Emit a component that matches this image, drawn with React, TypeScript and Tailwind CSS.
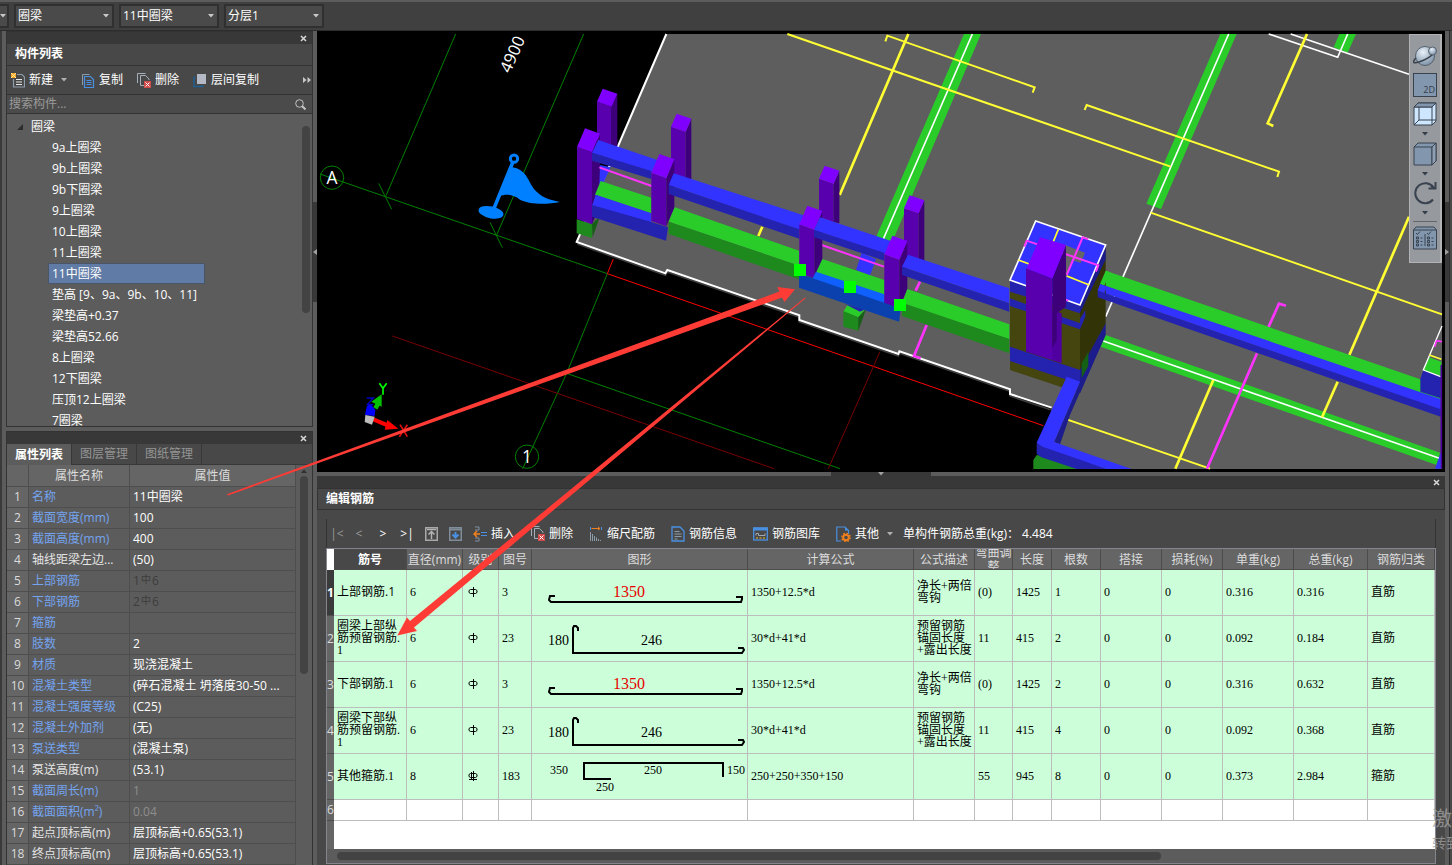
import { useState, type ReactNode } from "react";

// Rebar editor of the modelling tool: component tree and properties on the left,
// 3D view on top, rebar table below.

const UI_FONT = "font-['Open_Sans','Noto_Sans_CJK_SC',sans-serif]";
const CELL_FONT = "font-['Liberation_Serif','Noto_Sans_CJK_SC',serif]";

const COMPONENTS = [
  "9a上圈梁",
  "9b上圈梁",
  "9b下圈梁",
  "9上圈梁",
  "10上圈梁",
  "11上圈梁",
  "11中圈梁",
  "垫高 [9、9a、9b、10、11]",
  "梁垫高+0.37",
  "梁垫高52.66",
  "8上圈梁",
  "12下圈梁",
  "压顶12上圈梁",
  "7圈梁",
];

type Prop = { name: string; value: ReactNode; plain?: boolean; dim?: boolean };

function RebarValue({ count, size }: { count: number; size: number }) {
  return (
    <span className="flex h-5 items-center text-[#3c3c3c]">
      {count}
      <span className="mx-px pb-1 text-[10px] leading-3">中</span>
      {size}
    </span>
  );
}

const PROPS: Prop[] = [
  { name: "名称", value: "11中圈梁" },
  { name: "截面宽度(mm)", value: "100" },
  { name: "截面高度(mm)", value: "400" },
  { name: "轴线距梁左边...", value: "(50)", plain: true },
  { name: "上部钢筋", value: <RebarValue count={1} size={6} /> },
  { name: "下部钢筋", value: <RebarValue count={2} size={6} /> },
  { name: "箍筋", value: "" },
  { name: "肢数", value: "2" },
  { name: "材质", value: "现浇混凝土" },
  { name: "混凝土类型", value: "(碎石混凝土 坍落度30-50 ..." },
  { name: "混凝土强度等级", value: "(C25)" },
  { name: "混凝土外加剂", value: "(无)" },
  { name: "泵送类型", value: "(混凝土泵)" },
  { name: "泵送高度(m)", value: "(53.1)", plain: true },
  { name: "截面周长(m)", value: "1", dim: true },
  { name: "截面面积(m²)", value: "0.04", dim: true },
  { name: "起点顶标高(m)", value: "层顶标高+0.65(53.1)", plain: true },
  { name: "终点顶标高(m)", value: "层顶标高+0.65(53.1)", plain: true },
];

type Shape = "straight" | "bent" | "stirrup";

type Rebar = {
  name: string;
  dia: string;
  code: string;
  shape: Shape;
  formula: string;
  desc: string;
  bend: string;
  len: string;
  count: string;
  unit: string;
  total: string;
  kind: string;
};

const REBARS: Rebar[] = [
  { name: "上部钢筋.1", dia: "6", code: "3", shape: "straight", formula: "1350+12.5*d", desc: "净长+两倍\n弯钩", bend: "(0)", len: "1425", count: "1", unit: "0.316", total: "0.316", kind: "直筋" },
  { name: "圈梁上部纵\n筋预留钢筋.\n1", dia: "6", code: "23", shape: "bent", formula: "30*d+41*d", desc: "预留钢筋\n锚固长度\n+露出长度", bend: "11", len: "415", count: "2", unit: "0.092", total: "0.184", kind: "直筋" },
  { name: "下部钢筋.1", dia: "6", code: "3", shape: "straight", formula: "1350+12.5*d", desc: "净长+两倍\n弯钩", bend: "(0)", len: "1425", count: "2", unit: "0.316", total: "0.632", kind: "直筋" },
  { name: "圈梁下部纵\n筋预留钢筋.\n1", dia: "6", code: "23", shape: "bent", formula: "30*d+41*d", desc: "预留钢筋\n锚固长度\n+露出长度", bend: "11", len: "415", count: "4", unit: "0.092", total: "0.368", kind: "直筋" },
  { name: "其他箍筋.1", dia: "8", code: "183", shape: "stirrup", formula: "250+250+350+150", desc: "", bend: "55", len: "945", count: "8", unit: "0.373", total: "2.984", kind: "箍筋" },
];

const HEADERS = ["筋号", "直径(mm)", "级别", "图号", "图形", "计算公式", "公式描述", "弯曲调整", "长度", "根数", "搭接", "损耗(%)", "单重(kg)", "总重(kg)", "钢筋归类"];

function Caret({ className = "" }: { className?: string }) {
  return (
    <svg viewBox="0 0 6 4" className={`h-1 w-1.5 ${className}`} fill="currentColor" aria-hidden>
      <path d="M0 0h6L3 3.5z" />
    </svg>
  );
}

function CloseBar() {
  return (
    <div className="flex h-3 shrink-0 items-center justify-end bg-[#383838] pr-[5px]">
      <button type="button" aria-label="关闭" className="text-[#d8d8d8]">
        <svg viewBox="0 0 7 7" className="h-[7px] w-[7px]" stroke="currentColor" strokeWidth="1.5">
          <path d="M1 1l5 5M6 1l-5 5" />
        </svg>
      </button>
    </div>
  );
}

function Combo({ value, label }: { value: string; label: string }) {
  return (
    <div className="relative h-6 w-[100px] border-2 border-[#303030] bg-[#4a4a4a]">
      <select aria-label={label} className="h-full w-full appearance-none bg-transparent pl-[2px] text-[12px] leading-5 text-white outline-none">
        <option>{value}</option>
      </select>
      <Caret className="pointer-events-none absolute top-2 right-[3px] text-[#c8c8c8]" />
    </div>
  );
}

// ---- small icons ----

function NewIcon() {
  return (
    <svg viewBox="0 0 14 15" className="h-[15px] w-[14px]" fill="none">
      <path d="M6 1.5h5l2.5 2.5v10h-11V6" stroke="#8d9cab" strokeWidth="1.2" />
      <path d="M5 6.5h6M5 9h6M5 11.500h6" stroke="#e6e6e6" />
      <rect x="0" y="0" width="5" height="5" fill="#f5a623" />
      <path d="M0 0l5 5M5 0L0 5" stroke="#fff2c0" strokeWidth=".8" />
    </svg>
  );
}

function CopyIcon() {
  return (
    <svg viewBox="0 0 14 15" className="h-[15px] w-[14px]" fill="none">
      <path d="M1.500 12V1.500h7" stroke="#8d9cab" />
      <path d="M3.500 3.500h6l3 3v8h-9z" stroke="#4a90e2" strokeWidth="1.200" />
      <path d="M5.500 7.500h5M5.500 9.500h5M5.500 11.500h5" stroke="#4a90e2" />
    </svg>
  );
}

function DeleteIcon() {
  return (
    <svg viewBox="0 0 14 15" className="h-[15px] w-[14px]" fill="none">
      <path d="M.5 10V.5h8M7 12.500H3.500v-10h5l3.500 3.500V7" stroke="#a4afb9" />
      <rect x="7" y="8" width="7" height="7" fill="#d04a4a" />
      <path d="M8.500 9.500l4 4M12.500 9.500l-4 4" stroke="#fff" />
    </svg>
  );
}

function LayerCopyIcon() {
  return (
    <svg viewBox="0 0 14 15" className="h-[15px] w-[14px]" fill="none">
      <path d="M2.500 4.500H1v9h8.500V12" stroke="#1f5f94" strokeWidth="1.500" />
      <rect x="4" y="1" width="9" height="10" fill="#b4b8c4" />
    </svg>
  );
}

function MoveIcon({ down }: { down?: boolean }) {
  return (
    <svg viewBox="0 0 13 14" className="h-[14px] w-[13px]" fill="none">
      <rect x=".75" y=".75" width="11.500" height="12.500" stroke={down ? "#7f8c99" : "#a9a9a9"} strokeWidth="1.500" />
      {down ? (
        <>
          <path d="M1 2.500h11" stroke="#7f8c99" strokeWidth="2" />
          <path d="M6.500 5v5M3.500 7.500l3 3 3-3" stroke="#4a90e2" strokeWidth="2" />
        </>
      ) : (
        <path d="M2 2.500h9M6.500 12V5M3.500 7.500l3-3 3 3" stroke="#b4b4b4" strokeWidth="1.500" />
      )}
    </svg>
  );
}

function InsertIcon() {
  return (
    <svg viewBox="0 0 14 16" className="h-4 w-[14px]" fill="none">
      <path d="M2 1h4v3H2M2 15h4v-3H2" stroke="#7f8fa0" />
      <path d="M7 8H2M4 5L1 8l3 3" stroke="#f0801e" strokeWidth="1.500" />
      <path d="M8 6.500h6M8 9.500h6" stroke="#4a90e2" />
    </svg>
  );
}

function ScaleIcon() {
  return (
    <svg viewBox="0 0 14 16" className="h-4 w-[14px]" fill="none">
      <path d="M1.500 1v3M12.500 1v3" stroke="#4a90e2" />
      <path d="M2.500 2.500h8M9 1l2 1.500L9 4" stroke="#f0801e" />
      <path d="M1.500 6v9M3.500 8v7M5.500 10v5M7.500 11.500v3.500M9.500 13v2M11.500 14v1" stroke="#8d9cab" />
    </svg>
  );
}

function InfoIcon() {
  return (
    <svg viewBox="0 0 14 16" className="h-4 w-[14px]" fill="none">
      <path d="M1 1h8l4 4v10H1z" stroke="#4a90e2" strokeWidth="1.300" />
      <path d="M3.500 5.500h5M3.500 8h7M3.500 10.500h7M3.500 13h3" stroke="#8d9cab" />
    </svg>
  );
}

function LibraryIcon() {
  return (
    <svg viewBox="0 0 15 14" className="h-[14px] w-[15px]" fill="none">
      <rect x=".7" y="1" width="13.600" height="12" stroke="#4a90e2" strokeWidth="1.300" />
      <path d="M0 2h15" stroke="#4a90e2" strokeWidth="3" />
      <path d="M3 8.500v-2h2.500v2h6.500v-2" stroke="#a0aab4" />
      <path d="M3 11h9" stroke="#f0c020" strokeDasharray="2 1.500" />
    </svg>
  );
}

function OtherIcon() {
  return (
    <svg viewBox="0 0 15 16" className="h-4 w-[15px]" fill="none">
      <path d="M5 15H.8V1H9l3.500 3.500V8" stroke="#4a90e2" strokeWidth="1.200" />
      <path d="M9 1v3.500h3.500" fill="#4a90e2" />
      <circle cx="10" cy="11.500" r="2.800" stroke="#f0801e" strokeWidth="2" />
      <circle cx="10" cy="11.500" r="4.200" stroke="#f0801e" strokeWidth="1.400" strokeDasharray="1.600 1.700" />
    </svg>
  );
}

function ToolButton({ icon, label, caret }: { icon: ReactNode; label: string; caret?: boolean }) {
  return (
    <button type="button" className="flex shrink-0 items-center gap-1 whitespace-nowrap">
      {icon}
      {label}
      {caret && <Caret className="ml-1 text-[#b0b0b0]" />}
    </button>
  );
}

// ---- left column ----

function ComponentPanel() {
  const [selected, setSelected] = useState("11中圈梁");
  return (
    <section className="flex min-h-0 flex-1 flex-col border border-[#333] bg-[#5c5c5c]">
      <CloseBar />
      <h2 className="h-[21px] shrink-0 bg-[#484848] pl-2 text-[12px] leading-5 font-bold text-white">构件列表</h2>
      <div className="flex h-[30px] shrink-0 items-center gap-3.5 border-y border-[#333] bg-[#484848] pl-1">
        <ToolButton icon={<NewIcon />} label="新建" caret />
        <ToolButton icon={<CopyIcon />} label="复制" />
        <ToolButton icon={<DeleteIcon />} label="删除" />
        <ToolButton icon={<LayerCopyIcon />} label="层间复制" />
        <button type="button" aria-label="更多" className="mr-px ml-auto text-[#c8c8c8]">
          <svg viewBox="0 0 8 6" className="h-1.5 w-2" fill="currentColor">
            <path d="M0 0l3.500 3L0 6zM4.500 0L8 3 4.500 6z" />
          </svg>
        </button>
      </div>
      <label className="flex h-[19px] shrink-0 items-center border-b border-[#333] bg-[#4b4b4b] pr-1.5">
        <input aria-label="搜索构件" placeholder="搜索构件..." className="min-w-0 flex-1 bg-transparent pl-0.5 text-[12px] leading-4 placeholder-[#9a9a9a] outline-none" />
        <svg viewBox="0 0 11 11" className="h-[11px] w-[11px]" fill="none" stroke="#c4c4c4">
          <circle cx="4.500" cy="4.500" r="3.800" />
          <path d="M7 7l3.500 3.500" strokeWidth="2" />
        </svg>
      </label>
      <div className="flex min-h-0 flex-1 overflow-hidden">
        <div className="min-w-0 flex-1 overflow-hidden pt-0.5">
          <div className="flex h-[21px] items-center gap-2 pl-2.5">
            <svg viewBox="0 0 6 6" className="h-1.5 w-1.5" fill="#2c2c2c">
              <path d="M6 0v6H0z" />
            </svg>
            圈梁
          </div>
          <ul className="pl-[41px]">
            {COMPONENTS.map((c) => (
              <li key={c}>
                <button
                  type="button"
                  onClick={() => setSelected(c)}
                  className={
                    c === selected
                      ? "block h-[21px] w-[157px] border border-[#4a5568] bg-[#607ba6] pl-[3px] text-left leading-[19px]"
                      : "block h-[21px] w-full pl-1 text-left leading-[21px] whitespace-nowrap"
                  }
                >
                  {c}
                </button>
              </li>
            ))}
          </ul>
        </div>
        <div className="w-2.5 shrink-0 pt-3">
          <div className="h-[187px] w-2 rounded-full bg-[#434343]" />
        </div>
      </div>
    </section>
  );
}

function PropertyPanel() {
  return (
    <section className="flex h-[434px] shrink-0 flex-col overflow-hidden border border-b-0 border-[#333] bg-[#5c5c5c]">
      <CloseBar />
      <div role="tablist" className="flex h-[21px] shrink-0 bg-[#484848] font-bold">
        <button type="button" role="tab" aria-selected className="w-16 bg-[#5c5c5c] text-white">
          属性列表
        </button>
        {["图层管理", "图纸管理"].map((t) => (
          <button key={t} type="button" role="tab" aria-selected={false} className="w-[65px] border-b border-l border-[#383838] font-normal text-[#959595]">
            {t}
          </button>
        ))}
        <div className="flex-1 border-b border-l border-[#383838]" />
      </div>
      <div className="flex">
        <table className="min-w-0 flex-1 table-fixed border-separate border-spacing-0">
          <colgroup>
            <col className="w-[22px]" />
            <col className="w-[101px]" />
            <col />
          </colgroup>
          <thead className="bg-[#656565] text-[#dcdcdc]">
            <tr className="h-[22px]">
              {["", "属性名称", "属性值"].map((h) => (
                <th key={h} className="border-r border-b border-[#4e4e4e] p-0 font-normal">
                  {h}
                </th>
              ))}
            </tr>
          </thead>
          <tbody>
            {PROPS.map((p, i) => (
              <tr key={p.name} className="h-[21px] leading-5">
                <th scope="row" className="border-r border-b border-[#4e4e4e] bg-[#656565] p-0 font-normal text-[#dcdcdc]">
                  {i + 1}
                </th>
                <td className={`truncate border-r border-b border-[#4e4e4e] p-0 pl-[3px] ${p.plain ? "text-[#e4e4e4]" : "text-[#74a4f0]"}`}>{p.name}</td>
                <td className={`truncate border-r border-b border-[#4e4e4e] p-0 pl-[3px] ${p.dim ? "text-[#8e8e8e]" : "text-white"}`}>{p.value}</td>
              </tr>
            ))}
          </tbody>
        </table>
        <div className="flex w-4 shrink-0 flex-col items-center gap-[3px] pt-1 text-[#303030]">
          <Caret className="rotate-180" />
          <div className="h-[198px] w-2 rounded-full bg-[#434343]" />
        </div>
      </div>
    </section>
  );
}

// ---- 3D view ----
// Scene units are a third of a pixel, so every vertex stays a whole number.

function Box({ pts, fill }: { pts: string; fill: string }) {
  return <polygon points={pts} fill={fill} />;
}

// x/y is the upper left corner of the front face.
function Post({ x, y, h, back }: { x: number; y: number; h: number; back?: boolean }) {
  const [dx, dy, w, k] = back ? [17, -39, 44, 15] : [24, -56, 45, 16];
  return (
    <g>
      <polygon points={`${x},${y} ${x + w},${y + k} ${x + w},${y + k + h} ${x},${y + h}`} fill="#5800ae" />
      <polygon
        points={`${x + w},${y + k} ${x + w + dx},${y + k + dy} ${x + w + dx},${y + k + h + (back ? 4 : dy)} ${x + w},${y + k + h}`}
        fill="#3d007a"
      />
      <polygon points={`${x},${y} ${x + dx},${y + dy} ${x + w + dx},${y + k + dy} ${x + w},${y + k}`} fill="#8000ff" />
    </g>
  );
}

const BLUE = "#3333ff";
const BLUE_D = "#2323af";
const GREEN = "#29cc29";
const GREEN_D = "#1e8a1e";

function Scene() {
  return (
    <svg viewBox="21 3 3384 1323" preserveAspectRatio="xMinYMin slice" className="absolute inset-0 h-full w-full" fill="none">
      <rect x="21" y="3" width="3384" height="1323" fill="#000" />

      {/* floor slab */}
      <Box pts="1069,12 800,636 1066,730 1072,720 1468,856 1468,870 1765,972 1768,964 2100,1078 2100,1092 2225,1133 2200,1317 3396,1317 3396,12" fill="#5e5e5e" />
      <path d="M802 642L1066 736L1072 726L1468 862V876L1765 978L1768 970L2100 1084V1098L2222 1139" stroke="#3e3e3e" strokeWidth="5" />
      <path d="M1069 12L800 636L1066 730L1072 720L1468 856V870L1765 972L1768 964L2100 1078V1092L2225 1133" stroke="#fff" strokeWidth="6" />

      {/* axis grid */}
      <g stroke="#008000" strokeWidth="3">
        <path d="M437 12L228 497M821 12L560 615M30 432L892 731L770 1030L638 1316M770 1030L1590 1316" />
        <path d="M206 460L245 538M540 577L577 653" />
        <circle cx="66" cy="443" r="35" />
        <circle cx="651" cy="1280" r="35" />
      </g>
      <path d="M910 687L892 731L2200 1187" stroke="#f00" strokeWidth="3" />
      <path d="M247 918L1392 1316M1710 965L1555 1316" stroke="#780000" strokeWidth="3" />
      <g fill="#fff" fontFamily="Open Sans, sans-serif" textAnchor="middle">
        <text x="66" y="462" fontSize="52">A</text>
        <text x="651" y="1299" fontSize="52">1</text>
        <text x="0" y="0" fontSize="50" transform="translate(623 80) rotate(-66)">4900</text>
      </g>

      {/* slab rebar and cross beams */}
      <Box pts="1962,12 2013,12 1745,640 1698,622" fill={GREEN} />
      <Box pts="2731,12 2780,12 2553,537 2509,521" fill={GREEN} />
      <Box pts="3088,12 3138,12 3113,68 3071,52" fill={GREEN} />
      <Box pts="2387,915 3390,1268 3380,1305 2372,950" fill={GREEN} />
      <path d="M1987 12L1720 627M2756 12L2387 860M3113 12L3083 82L2876 12M2942 12L3297 133M2380 933L3388 1285" stroke="#fff" strokeWidth="5" />
      <g stroke="#ffff33" strokeWidth="6">
        <path d="M1432 12L2582 410M1726 34L1732 17L2174 172L2168 188M2324 240L2330 225L2907 425L2902 441M2522 548L3396 853M2270 1168L2700 1316" />
        <path d="M1795 12L1589 495M1357 590L1345 618M2991 12L2873 280L2890 288M3297 560L3118 975M3083 1055L3036 1162M2710 1050L2596 1316" strokeWidth="8" />
      </g>
      <g stroke="#ff33ff" strokeWidth="8">
        <path d="M2928 827L2907 821L2875 892M2841 970L2691 1316M1830 755L1817 782M1850 885L1812 978L1832 985" />
      </g>

      {/* rear posts */}
      <Post x={861} y={215} h={115} back />
      <Post x={1083} y={290} h={150} back />
      <Post x={1527} y={446} h={115} back />
      <Post x={1782} y={535} h={140} back />

      {/* bay 1 */}
      <Box pts="800,568 846,582 846,624 800,610" fill={GREEN_D} />
      <Box pts="846,582 869,560 848,622" fill="#146014" />
      <Post x={801} y={351} h={216} />
      <Box pts="870,405 902,412 880,460 868,465" fill={BLUE} />
      <path d="M868 412L1025 468" stroke="#ff33ff" strokeWidth="6" />
      <Box pts="865,330 1042,390 1024,428 846,368" fill={BLUE} />
      <Box pts="846,368 1024,423 1024,447 846,392" fill={BLUE_D} />
      <Box pts="872,453 1024,503 1024,550 855,494" fill={GREEN} />
      <Box pts="857,494 1024,550 1024,580 846,528" fill={BLUE} />
      <Box pts="846,525 1024,576 1074,592 1068,632 846,560" fill={BLUE_D} />

      {/* bay 2 */}
      <Post x={1024} y={428} h={145} />
      <Box pts="1091,430 1494,560 1468,600 1076,465" fill={BLUE} />
      <Box pts="1076,465 1468,598 1468,626 1076,492" fill={BLUE_D} />
      <Box pts="1094,532 1467,662 1467,707 1076,575" fill={GREEN} />
      <Box pts="1076,575 1467,707 1467,748 1076,612" fill={GREEN_D} />

      {/* bay 3, with the selected beam */}
      <Box pts="1655,668 1698,688 1680,736 1638,720" fill={BLUE} />
      <path d="M1535 645L1722 710" stroke="#ff33ff" strokeWidth="6" />
      <Box pts="1600,845 1612,825 1665,838 1645,862" fill={GREEN} />
      <Box pts="1600,843 1645,862 1645,902 1600,890" fill={GREEN_D} />
      <Box pts="1645,862 1668,838 1645,902" fill="#146014" />
      <Box pts="1605,822 1665,838 1650,845" fill={BLUE_D} />
      <Box pts="1467,733 1508,743 1723,812 1772,840 1767,875 1467,773" fill="#0b41ae" />
      <Post x={1468} y={583} h={146} />
      <Box pts="1530,562 1750,635 1723,672 1512,600" fill={BLUE} />
      <Box pts="1512,600 1723,668 1723,692 1512,622" fill={BLUE_D} />
      <Box pts="1537,687 1723,750 1723,797 1518,728" fill={GREEN} />
      <Box pts="1518,725 1723,793 1723,818 1508,745" fill="#1060ff" />

      {/* bay 4 */}
      <Post x={1723} y={673} h={145} />
      <Box pts="1794,674 2098,775 2098,820 1776,710" fill={BLUE} />
      <Box pts="1776,710 2098,820 2098,845 1776,735" fill={BLUE_D} />
      <Box pts="1792,777 2098,883 2098,928 1776,820" fill={GREEN} />
      <Box pts="1776,818 2098,927 2098,970 1776,858" fill={GREEN_D} />

      <g fill="#00ff00">
        <rect x="1452" y="702" width="36" height="36" />
        <rect x="1602" y="753" width="36" height="36" />
        <rect x="1752" y="807" width="36" height="36" />
      </g>

      {/* beam to the right */}
      <Box pts="2387,722 3331,1048 3392,1070 3392,1115 2370,762" fill={GREEN} />
      <Box pts="2370,762 3392,1107 3392,1140 2363,782" fill={BLUE} />
      <Box pts="2363,782 3392,1138 3392,1160 2363,802" fill={BLUE_D} />
      <Box pts="3331,1048 3340,1020 3392,1038 3392,1105 3331,1085" fill={BLUE_D} />
      <Box pts="3340,1020 3358,982 3394,995 3392,1038" fill={GREEN} />
      <path d="M3396 888L3340 1020L3392 1040" stroke="#fff" strokeWidth="4" />
      <path d="M3358 975L3394 988" stroke="#ffff33" strokeWidth="5" />
      <path d="M3374 950L3380 932L3396 935" stroke="#ff33ff" strokeWidth="5" />
      <path d="M3394 1005V1316" stroke="#4d0099" strokeWidth="5" />
      <Box pts="3392,1268 3375,1316 3392,1316" fill={BLUE} />

      {/* core column */}
      <Box pts="2100,750 2310,825 2310,1090 2100,1020" fill="#454510" />
      <Box pts="2310,825 2387,645 2387,880 2310,1060" fill="#333308" />
      <Box pts="2100,752 2310,826 2310,850 2100,785" fill={BLUE_D} />
      <Box pts="2100,805 2310,880 2310,898 2100,828" fill={BLUE_D} />
      <Box pts="2310,866 2326,840 2326,860 2310,898" fill={BLUE_D} />
      <Box pts="2100,950 2310,1020 2310,1062 2100,993" fill={BLUE_D} />
      <Box pts="2310,825 2387,645 2387,688 2310,850" fill="#1c1c8c" />
      <Box pts="2310,1020 2387,880 2387,915 2310,1090" fill="#1c1c8c" />
      <Box pts="2315,1000 2335,965 2335,1010 2315,1045" fill="#146014" />
      {/* the right beam runs into the column face */}
      <Box pts="2387,722 2400,727 2383,767 2370,762" fill={GREEN} />
      <Box pts="2370,762 2390,769 2383,790 2363,782" fill={BLUE} />
      <Box pts="2363,782 2390,791 2390,811 2363,802" fill={BLUE_D} />
      <polygon points="2177,573 2387,645 2310,825 2100,750" fill={BLUE} stroke="#fff" strokeWidth="5" />
      <Box pts="2265,645 2325,668 2292,748 2245,732" fill="#666" />
      <Box pts="2285,690 2316,700 2298,745 2270,735" fill={BLUE} />
      <path d="M2245 598L2230 635M2125 690L2160 703M2270 738L2338 765" stroke="#ffff33" strokeWidth="5" />
      <path d="M2143 650L2150 632L2365 706L2358 725M2335 628L2318 622L2270 735M2240 800L2275 812" stroke="#ff33ff" strokeWidth="6" />
      <Box pts="2227,840 2255,850 2255,1000 2148,965 2152,935 2227,940" fill="#5000a0" />
      <Box pts="2148,715 2227,745 2227,990 2148,962" fill="#5800ae" />
      <Box pts="2227,745 2268,645 2268,830 2240,850 2240,930 2227,955" fill="#3d007a" />
      <Box pts="2190,622 2268,645 2227,745 2150,715" fill="#8000ff" />

      {/* lower L beam */}
      <Box pts="2310,1055 2387,910 2280,1155 2250,1243 2232,1236" fill="#1c1c8c" />
      <Box pts="2170,1290 2180,1275 2210,1280 2300,1317 2170,1317" fill={GREEN_D} />
      <Box pts="2180,1238 2206,1246 2390,1317 2300,1317 2194,1282 2180,1272" fill={BLUE_D} />
      <Box pts="2270,1040 2310,1055 2232,1236 2465,1317 2390,1317 2198,1250 2180,1238" fill={BLUE} />

      {/* view flag */}
      <g fill="#0080ff">
        <circle cx="612" cy="386" r="11" fill="none" stroke="#0080ff" strokeWidth="9" />
        <path d="M608 398L552 535" stroke="#0080ff" strokeWidth="11" />
        <path d="M606 412C655 418 655 465 680 485C700 505 725 510 750 516C710 524 660 524 630 509C610 494 590 490 566 500Z" />
        <ellipse cx="543" cy="547" rx="38" ry="18" transform="rotate(12 543 547)" />
      </g>

      {/* axis triad */}
      <path d="M190 1168L235 1187" stroke="#f00" strokeWidth="12" />
      <path d="M232 1170L265 1196L224 1199Z" fill="#f00" />
      <path d="M196 1135L206 1118" stroke="#00c000" strokeWidth="14" />
      <path d="M184 1115L215 1093V1130Z" fill="#00c000" />
      <path d="M165 1155L170 1130L180 1120L196 1140L194 1158Z" fill="#0000ff" />
      <path d="M166 1155L194 1160L186 1184L164 1176Z" fill="#bdbdbd" />
      <path d="M170 1104H190L172 1124H190" stroke="#0000c0" strokeWidth="4" />
      <path d="M208 1060L219 1075L230 1060M219 1075V1094" stroke="#0f0" strokeWidth="5" />
      <path d="M270 1184L292 1220M292 1184L268 1220" stroke="#e01010" strokeWidth="5" />
    </svg>
  );
}

function Cube({ open }: { open?: boolean }) {
  return (
    <svg viewBox="0 0 24 24" className="h-6 w-6" stroke="#39434f" fill="none">
      <path d="M1 5L5 1H23V19L19 23H1Z" fill={open ? "#cfe6ff" : "#8296ad"} />
      <path d="M1 5H19V23M19 5L23 1" />
      {open ? (
        <>
          <path d="M1 5L5 1H23L19 5Z" fill="#8296ad" />
          <path d="M6 5V18H23M6 18L1 23" />
        </>
      ) : (
        <path d="M19 5L23 1V19L19 23Z" fill="#8fa0b4" />
      )}
    </svg>
  );
}

function ViewTools() {
  return (
    <div className="absolute top-[3px] right-[3px] flex w-[33px] flex-col items-center border border-r-2 border-[#b0b2b4] bg-[#96999d] pt-[9px] pb-3 text-[#333d49]">
      <button type="button" aria-label="动态观察">
        <svg viewBox="0 0 24 24" className="h-6 w-6">
          <defs>
            <radialGradient id="orb" cx=".4" cy=".3" r=".7">
              <stop offset="0" stopColor="#e9f2fa" />
              <stop offset="1" stopColor="#7f93a8" />
            </radialGradient>
          </defs>
          <circle cx="12" cy="12" r="9.500" fill="url(#orb)" stroke="#55616e" />
          <path d="M3 14C-1 18 0 20 6 18C13 16 20 11 22 8" fill="none" stroke="#39434f" strokeWidth="1.500" />
          <circle cx="19.500" cy="7" r="4" fill="url(#orb)" stroke="#55616e" />
        </svg>
      </button>
      <button type="button" className="mt-[5px] flex h-6 w-6 items-end justify-end border border-[#39434f] bg-[#8296ad] pr-px text-[9px] leading-3">
        2D
      </button>
      <button type="button" aria-label="线框" className="mt-[5px]">
        <Cube open />
      </button>
      <Caret className="my-1.5" />
      <button type="button" aria-label="实体">
        <Cube />
      </button>
      <Caret className="mt-1.5 mb-[5px]" />
      <button type="button" aria-label="旋转">
        <svg viewBox="0 0 24 24" className="h-6 w-6" fill="none" stroke="#39434f" strokeWidth="2">
          <path d="M20 18.500A10 10 0 1 1 20.500 6.500" />
          <path d="M15.500 7.500H22.500V1M22 7.500L18 5" />
        </svg>
      </button>
      <Caret className="my-1.5" />
      <div className="mb-1 h-px w-6 bg-[#666]" />
      <button type="button" aria-label="显示设置">
        <svg viewBox="0 0 24 24" className="h-6 w-6" fill="none" stroke="#39434f">
          <path d="M.5 4L3 1H21L23.500 4V23H.5Z" fill="#8296ad" />
          <path d="M.5 4H23.500M12 8V20M3 7l1.500 1.500L7 5.500M14 7l1.500 1.500L18 5.500" />
          <path d="M3.500 11h2v2h-2zM3.500 14.500h2v2h-2zM3.500 18h2v2h-2zM14.500 11h2v2h-2zM14.500 14.500h2v2h-2zM14.500 18h2v2h-2zM7.500 12h2M7.500 15.500h2M7.500 19h2M18.500 12h2M18.500 15.500h2M18.500 19h2" />
        </svg>
      </button>
    </div>
  );
}

// ---- rebar editor ----

function ShapeDrawing({ shape }: { shape: Shape }) {
  return (
    <svg viewBox="0 0 215 45" className="block h-[45px] w-[215px]" fill="none" stroke="#000" strokeWidth="2">
      {shape === "straight" && (
        <>
          <path d="M23 26H18L17 30L19 32H209L210 29V27H204" />
          <text x="81" y="27" fontSize="16" fill="#e60000" stroke="none">1350</text>
        </>
      )}
      {shape === "bent" && (
        <>
          <path d="M46 15V12L44 10H42L41 12V37H210L212 34L211 32H206" />
          <text x="16" y="29" fontSize="14" fill="#000" stroke="none">180</text>
          <text x="109" y="29" fontSize="14" fill="#000" stroke="none">246</text>
        </>
      )}
      {shape === "stirrup" && (
        <>
          <path d="M79 25H52V9H191V23" />
          <g fontSize="12" fill="#000" stroke="none">
            <text x="18" y="20">350</text>
            <text x="112" y="20">250</text>
            <text x="195" y="20">150</text>
            <text x="64" y="37">250</text>
          </g>
        </>
      )}
    </svg>
  );
}

function Grade({ ribbed }: { ribbed: boolean }) {
  return (
    <svg viewBox="0 0 10 10" className="ml-0.5 h-2.5 w-2.5" fill="none" stroke="#000" role="img" aria-label={ribbed ? "三级钢" : "一级钢"}>
      <path d="M2.500 2.500H7.500L9 3.500V5.500L7.500 6.500H2.500L1 5.500V3.500ZM5.500 0V10" />
      {ribbed && <path d="M3.500 1V9M1 8.500H9" />}
    </svg>
  );
}

const TD = "border-r border-b border-[#bdbdbd] p-0 pb-px pl-[3px] text-left";

function RebarTable() {
  return (
    <table className={`w-full table-fixed border-separate border-spacing-0 bg-white text-[12px] leading-3 text-black ${CELL_FONT}`}>
      <colgroup>
        <col className="w-[7px]" />
        <col className="w-[73px]" />
        <col className="w-[56px]" />
        <col className="w-[36px]" />
        <col className="w-[33px]" />
        <col className="w-[216px]" />
        <col className="w-[166px]" />
        <col className="w-[61px]" />
        <col className="w-[38px]" />
        <col className="w-[39px]" />
        <col className="w-[49px]" />
        <col className="w-[61px]" />
        <col className="w-[61px]" />
        <col className="w-[71px]" />
        <col className="w-[74px]" />
        <col />
      </colgroup>
      <thead className={UI_FONT}>
        <tr className="h-[21px]">
          <td className="p-0" />
          {HEADERS.map((h, i) => (
            <th
              key={h}
              className={`border-r border-b border-[#4c4c4c] p-0 ${i === 0 ? "bg-[#484848] font-bold text-white" : "bg-[#656565] font-normal text-[#dcdcdc]"}`}
            >
              <div className="flex h-5 items-center justify-center overflow-hidden pt-px leading-[14px]">{h}</div>
            </th>
          ))}
        </tr>
      </thead>
      <tbody>
        {REBARS.map((r, i) => (
          <tr key={r.name + r.count} className="h-[46px] bg-[#ccffd9]">
            <th
              scope="row"
              className={`border-b border-[#4c4c4c] p-0 ${UI_FONT} ${i === 0 ? "bg-[#3a3a3a] font-bold text-white" : "bg-[#656565] font-normal text-[#dcdcdc]"}`}
            >
              {i + 1}
            </th>
            <td className={`${TD} whitespace-pre ${i === 0 ? UI_FONT : ""}`}>{r.name}</td>
            <td className={TD}>{r.dia}</td>
            <td className={TD}>
              <Grade ribbed={r.shape === "stirrup"} />
            </td>
            <td className={TD}>{r.code}</td>
            <td className="border-r border-b border-[#bdbdbd] p-0">
              <ShapeDrawing shape={r.shape} />
            </td>
            <td className={TD}>{r.formula}</td>
            <td className={`${TD} whitespace-pre`}>{r.desc}</td>
            <td className={TD}>{r.bend}</td>
            <td className={TD}>{r.len}</td>
            <td className={TD}>{r.count}</td>
            <td className={TD}>0</td>
            <td className={TD}>0</td>
            <td className={TD}>{r.unit}</td>
            <td className={TD}>{r.total}</td>
            <td className={TD}>{r.kind}</td>
          </tr>
        ))}
        <tr className="h-[21px]">
          <th scope="row" className={`border-b border-[#4c4c4c] bg-[#656565] p-0 font-normal text-[#dcdcdc] ${UI_FONT}`}>
            6
          </th>
          {HEADERS.map((h) => (
            <td key={h} className={TD} />
          ))}
        </tr>
        <tr className="h-7">
          <td className="bg-[#656565] p-0" />
        </tr>
      </tbody>
    </table>
  );
}

function RebarEditor() {
  return (
    <section className="flex h-[389px] shrink-0 flex-col bg-[#484848]">
      <CloseBar />
      <h2 className="h-[22px] shrink-0 border border-[#333] pl-2 leading-5 font-bold text-white">编辑钢筋</h2>
      <div className="mt-[9px] mr-[9px] ml-[9px] flex h-[29px] shrink-0 items-center gap-4 overflow-hidden border-x border-[#333]">
        <div className="flex items-center">
          {["|<", "<", ">", ">|"].map((t, i) => (
            <button key={t} type="button" className={`text-center text-[12px] ${i === 0 ? "w-5" : "w-6"} ${i < 2 ? "text-[#999]" : "text-white"}`}>
              {t}
            </button>
          ))}
          <button type="button" aria-label="上移" className="flex w-6 justify-center">
            <MoveIcon />
          </button>
          <button type="button" aria-label="下移" className="mr-1.5 flex w-6 justify-center">
            <MoveIcon down />
          </button>
          <ToolButton icon={<InsertIcon />} label="插入" />
        </div>
        <ToolButton icon={<DeleteIcon />} label="删除" />
        <ToolButton icon={<ScaleIcon />} label="缩尺配筋" />
        <ToolButton icon={<InfoIcon />} label="钢筋信息" />
        <ToolButton icon={<LibraryIcon />} label="钢筋图库" />
        <div className="flex items-center gap-2.5">
          <ToolButton icon={<OtherIcon />} label="其他" caret />
          <span className="whitespace-nowrap">单构件钢筋总重(kg)： 4.484</span>
        </div>
      </div>
      <div className="mx-[9px] border border-[#85858f] bg-[#5c5c5c]">
        <RebarTable />
        <div className="flex h-[14px] items-center pl-2.5">
          <div className="h-2 w-[75%] rounded-full bg-[#434343]" />
        </div>
      </div>
    </section>
  );
}

function SideSplitter({ right }: { right?: boolean }) {
  return (
    <div className="w-1 shrink-0 bg-[#5c5c5c] pt-[171px]">
      <div className="flex h-[100px] items-center bg-[#383838] text-[#a0a0a0]">
        <svg viewBox="0 0 4 6" className={`h-1.5 w-1 ${right ? "rotate-180" : ""}`} fill="currentColor">
          <path d="M4 0v6L0 3z" />
        </svg>
      </div>
    </div>
  );
}

// Red pointers from the property list to the beam and on to its table row.
function Pointers() {
  return (
    <svg width="1452" height="865" viewBox="0 0 1452 865" className="pointer-events-none absolute top-0 left-0" fill="#ff3b36" aria-hidden>
      <path d="M227 494.200L779.500 291.500L777 287L795 289.300L784.500 302L782 297.500L228 495.400Z" />
      <path d="M805 297.500L410 621L407 617.500L397.300 635.500L417 631L414 627.500L805.600 298.200Z" />
    </svg>
  );
}

export default function App() {
  return (
    <div className={`relative flex h-screen flex-col overflow-hidden bg-[#484848] text-[12px] text-white ${UI_FONT}`}>
      <header className="flex h-[31px] shrink-0 items-center gap-[5px] border-t-2 border-b border-t-[#5c5c5c] border-b-[#2c2c2c] bg-[#404040]">
        <div className="flex h-6 w-[9px] items-center border-2 border-l-0 border-[#303030] bg-[#4a4a4a] text-[#c8c8c8]">
          <Caret />
        </div>
        <Combo label="构件类型" value="圈梁" />
        <Combo label="构件" value="11中圈梁" />
        <Combo label="分层" value="分层1" />
      </header>

      <div className="flex min-h-0 flex-1">
        <div className="w-1.5 shrink-0 border-l-2 border-[#3a3a3a] bg-[#5c5c5c]" />
        <div className="flex w-[307px] shrink-0 flex-col gap-1 bg-[#5c5c5c]">
          <ComponentPanel />
          <PropertyPanel />
        </div>
        <SideSplitter />
        <main className="flex min-w-0 flex-1 flex-col">
          <div className="relative min-h-0 flex-1 overflow-hidden bg-black">
            <Scene />
            <ViewTools />
          </div>
          <div className="flex h-1 shrink-0 justify-center bg-[#5c5c5c]">
            <div className="flex w-[100px] justify-center bg-[#383838] text-[#a0a0a0]">
              <Caret />
            </div>
          </div>
          <RebarEditor />
        </main>
        <SideSplitter right />
        <div className="w-[3px] shrink-0 border-l border-[#2c2c2c] bg-[#4a4a4a]" />
      </div>

      <Pointers />
      <div className="pointer-events-none absolute right-0 bottom-3 w-5 overflow-hidden whitespace-nowrap text-[#a0a0a0]/80">
        <div className="text-[20px] leading-7">激</div>
        <div className="text-[14px] leading-5">转到</div>
      </div>
    </div>
  );
}
